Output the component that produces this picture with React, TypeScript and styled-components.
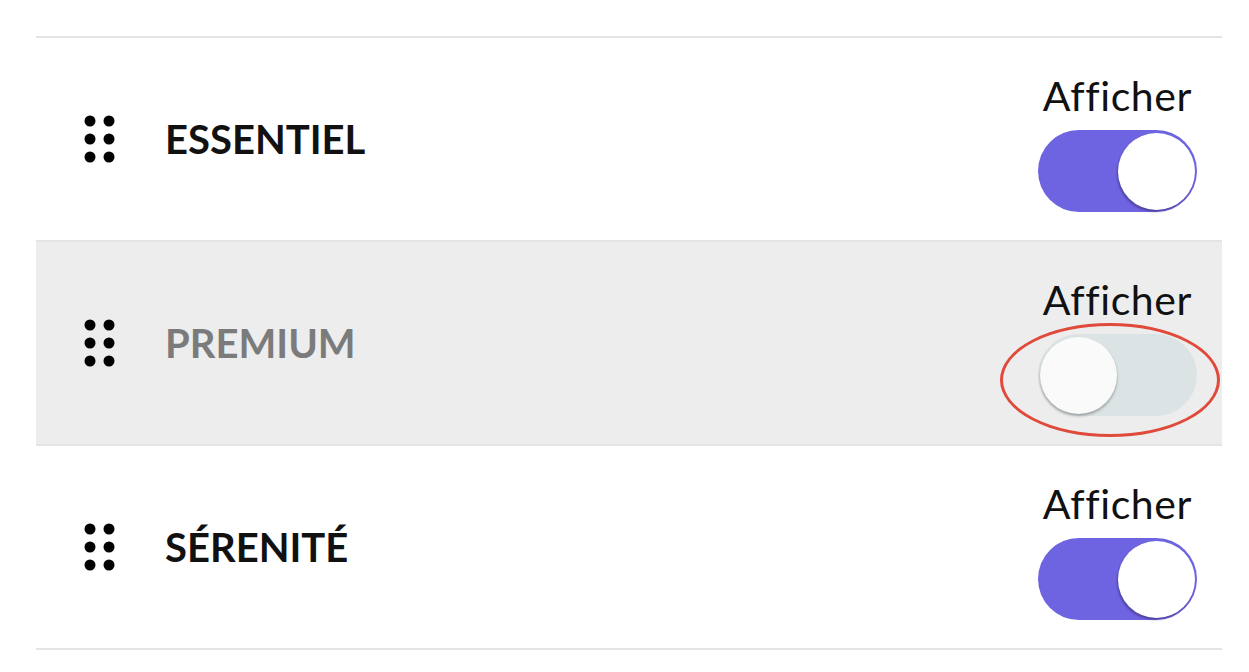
import React, { useState } from "react";
import styled, { createGlobalStyle } from "styled-components";

const GlobalStyle = createGlobalStyle`
  html, body {
    margin: 0;
    padding: 0;
    background: #ffffff;
    font-family: Lato, "Open Sans", "Liberation Sans", sans-serif;
  }
`;

const Page = styled.div`
  padding: 36px 27px 0 36px;
`;

const List = styled.div`
  border-top: 2px solid #e4e4e4;
`;

const Row = styled.div<{ $muted: boolean }>`
  display: flex;
  align-items: center;
  height: 202px;
  padding-left: 47px;
  padding-right: 25px;
  background: ${(p) => (p.$muted ? "#ededed" : "#ffffff")};
  border-bottom: 2px solid #e4e4e4;
`;

const Handle = styled.svg`
  flex: none;
  width: 34px;
  height: 48px;
`;

const Title = styled.div<{ $muted: boolean }>`
  margin-left: 48px;
  font-size: 40px;
  font-weight: 700;
  color: ${(p) => (p.$muted ? "#7b7b7b" : "#111111")};
`;

const Control = styled.div`
  margin-left: auto;
  padding-top: 10px;
  display: flex;
  flex-direction: column;
  align-items: center;
  gap: 14px;
`;

const Label = styled.div`
  font-size: 41px;
  line-height: 40px;
  letter-spacing: 0.6px;
  color: #111111;
`;

const SwitchWrap = styled.div`
  position: relative;
  width: 159px;
  height: 82px;
`;

const Track = styled.button<{ $on: boolean }>`
  display: flex;
  align-items: center;
  justify-content: ${(p) => (p.$on ? "flex-end" : "flex-start")};
  width: 100%;
  height: 100%;
  padding: 0 2px;
  border: none;
  border-radius: 41px;
  cursor: pointer;
  background: ${(p) => (p.$on ? "#6e63e1" : "#dce3e5")};
`;

const Knob = styled.span<{ $on: boolean }>`
  width: 77px;
  height: 77px;
  border-radius: 50%;
  background: ${(p) => (p.$on ? "#ffffff" : "#fafafa")};
  box-shadow: ${(p) =>
    p.$on
      ? "-1px 2px 2px rgba(40, 30, 90, 0.45)"
      : "0 2px 3px rgba(0, 0, 0, 0.3)"};
`;

const Highlight = styled.div`
  position: absolute;
  left: -38px;
  top: -11px;
  width: 214px;
  height: 108px;
  border: 3px solid #e04a3b;
  border-radius: 50%;
  pointer-events: none;
`;

type Offer = { id: string; name: string; visible: boolean; marked?: boolean };

const initial: Offer[] = [
  { id: "essentiel", name: "ESSENTIEL", visible: true },
  { id: "premium", name: "PREMIUM", visible: false, marked: true },
  { id: "serenite", name: "SÉRENITÉ", visible: true },
];

const DragHandle = () => (
  <Handle viewBox="0 0 34 48">
    {[6, 24, 42].map((cy) =>
      [7, 26].map((cx) => <circle key={`${cx}-${cy}`} cx={cx} cy={cy} r={5.5} fill="#000" />)
    )}
  </Handle>
);

const App = () => {
  const [offers, setOffers] = useState(initial);

  const toggle = (id: string) =>
    setOffers((list) => list.map((o) => (o.id === id ? { ...o, visible: !o.visible } : o)));

  return (
    <Page>
      <GlobalStyle />
      <List>
        {offers.map((o) => (
          <Row key={o.id} $muted={!o.visible}>
            <DragHandle />
            <Title $muted={!o.visible}>{o.name}</Title>
            <Control>
              <Label>Afficher</Label>
              <SwitchWrap>
                <Track $on={o.visible} onClick={() => toggle(o.id)}>
                  <Knob $on={o.visible} />
                </Track>
                {o.marked && <Highlight />}
              </SwitchWrap>
            </Control>
          </Row>
        ))}
      </List>
    </Page>
  );
};

export default App;
